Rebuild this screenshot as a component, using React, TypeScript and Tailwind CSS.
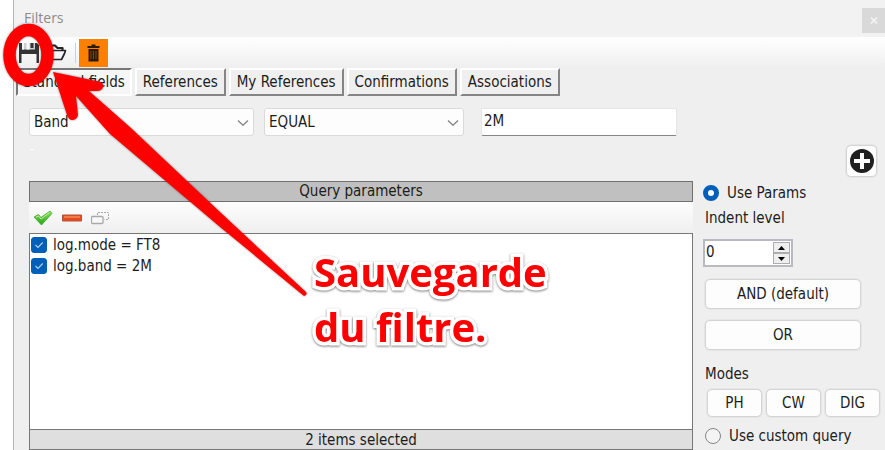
import { useState } from "react";
import type { ReactNode } from "react";

const tabs = ["Standard fields", "References", "My References", "Confirmations", "Associations"];

const modes = ["PH", "CW", "DIG"];

const buttonClass =
  "flex items-center justify-center rounded-[5px] border border-[#d4d4d4] bg-[#fdfdfd] shadow-[0_0_0_1px_#e6e6e6]";

function Dropdown({ label, options, className }: { label: string; options: string[]; className: string }) {
  return (
    <div className={`relative ${className}`}>
      <select
        aria-label={label}
        className="h-7 w-full appearance-none rounded-[3px] border border-[#dadada] bg-[#fdfdfd] pl-1 pr-7 outline-none"
      >
        {options.map((option) => (
          <option key={option}>{option}</option>
        ))}
      </select>
      <svg
        className="pointer-events-none absolute right-[5px] top-3 h-[6px] w-3"
        viewBox="0 0 12 6"
        fill="none"
        stroke="#868686"
        strokeWidth="1.3"
      >
        <path d="M1 .5 6 5.3 11 .5" />
      </svg>
    </div>
  );
}

function CheckItem({ children }: { children: ReactNode }) {
  return (
    <label className="flex h-[21px] items-center gap-[6px]">
      <span className="relative h-4 w-4">
        <input
          type="checkbox"
          defaultChecked
          className="block h-4 w-4 appearance-none rounded-[3px] border border-[#005fb8] checked:bg-[#005fb8]"
        />
        <svg
          className="pointer-events-none absolute inset-0"
          viewBox="0 0 16 16"
          fill="none"
          stroke="#b5d2ec"
          strokeWidth="1.1"
        >
          <path d="m4.5 8 2.500 2.500 4.700-5" />
        </svg>
      </span>
      {children}
    </label>
  );
}

function SaveIcon() {
  return (
    <svg width="20" height="20" viewBox="0 0 20 20">
      <path d="M0 0h18l2 2v18h-2.500v-9h-15v9H0z" fill="#333" />
      <path d="M3 0h13v6.500H3z" fill="#c9d0d3" />
      <path d="M3 0h2v6.500H3z M7.500 0h3v6.500h-3z" fill="#f8f8f8" />
      <path d="M11.500 0h3v5h-3z" fill="#333" />
    </svg>
  );
}

function FolderIcon() {
  return (
    <svg width="20" height="17" viewBox="0 0 20 17" fill="none" stroke="#262626" strokeWidth="1.700" strokeLinejoin="round">
      <path d="M2 14V1.500h6l2.500 2.500h5v3" strokeWidth="2.200" />
      <path d="M2 15.500 6 6.500h12.500l-1 3-3 6z" />
    </svg>
  );
}

function TrashIcon() {
  return (
    <svg width="13" height="18" viewBox="0 0 13 18">
      <path d="M.5 2h4V.5h4V2h4v2H.5z M1.500 5h10v12.500h-10z" fill="#2b1a05" />
      <path d="M4 7v8M6.500 7v8M9 7v8" stroke="#9c5208" strokeWidth="0.8" />
    </svg>
  );
}

function TickIcon() {
  return (
    <svg width="20" height="16" viewBox="0 0 20 16">
      <defs>
        <linearGradient id="tick" x1="0" y1="0" x2="0" y2="1">
          <stop offset="0" stopColor="#8be35c" />
          <stop offset="1" stopColor="#22a514" />
        </linearGradient>
      </defs>
      <path d="m1 7 4.500-2.500L8 7.500 17 1l2 2.500L8.500 15z" fill="url(#tick)" stroke="#3b9e2c" strokeWidth="0.7" />
      <path d="m3 7.300 2.500-1.300L8 9l8.500-6.500" fill="none" stroke="#c5f5a5" strokeWidth="0.9" />
    </svg>
  );
}

function MinusIcon() {
  return (
    <svg width="20" height="8" viewBox="0 0 20 8">
      <path d="M.5 1h19v6H.5z" fill="#e54b1c" stroke="#b5553c" />
      <path d="M2 3h16" stroke="#f58b5a" strokeWidth="1.500" />
    </svg>
  );
}

function CopyIcon() {
  return (
    <svg width="18" height="14" viewBox="0 0 18 14" fill="none" stroke="#a9a9a9">
      <path d="M6.500 4V1.500h11v7h-4" strokeDasharray="2 1" />
      <rect x="0.500" y="5.500" width="11.500" height="7" rx="1" fill="#f8f8f8" strokeWidth="1.300" />
    </svg>
  );
}

// Red marker, arrow and caption that point at the save button
function Annotation() {
  return (
    <div className="pointer-events-none absolute left-0 top-0">
      <svg width="320" height="310" viewBox="0 0 320 310" className="drop-shadow-[0_0_1px_rgba(0,0,0,0.45)]">
        <ellipse cx="28.500" cy="55" rx="19" ry="25" fill="none" stroke="#f00" strokeWidth="12.500" />
        <path
          d="M53 72 99 81.500Q104 83 103 87 102 91 97 91L89 91 131 128 220 212 306 292Q308 295 304 296L220 227 110 134 76 96 78 115Q77 120 72 120 69 120 67 115Z"
          fill="#f00"
        />
      </svg>
      <p className="absolute left-[314px] top-[244px] whitespace-nowrap font-['Open_Sans',sans-serif] text-[40px] font-bold leading-[55px] text-[#f00] [-webkit-text-stroke:7px_white] [filter:drop-shadow(0_1px_1px_rgba(0,0,0,0.5))] [paint-order:stroke_fill]">
        Sauvegarde
        <br />
        du filtre.
      </p>
    </div>
  );
}

export default function App() {
  const [tab, setTab] = useState(tabs[0]);
  const [indent, setIndent] = useState(0);

  return (
    <div className="relative flex min-h-screen overflow-hidden bg-white pl-[13px] font-['DejaVu_Sans_Condensed','DejaVu_Sans',sans-serif] text-[15px] leading-5 text-[#1c1c1c]">
      <main className="flex min-w-0 flex-1 flex-col border-l border-[#b5b5b5] bg-[#efefef]">
        <header className="flex h-[37px] items-start justify-between bg-[#f2f2f2]">
          <h1 className="pl-[10px] pt-2 font-['Open_Sans',sans-serif] text-[14px] text-[#8c8c8c]">Filters</h1>
          <button type="button" aria-label="Close" className="mt-2 flex h-[25px] w-[23px] items-center justify-center bg-[#d9d9d9]">
            <svg width="8" height="7" viewBox="0 0 8 7" stroke="#f5f5f5" strokeWidth="1.600">
              <path d="m1 .5 6 6M7 .5l-6 6" />
            </svg>
          </button>
        </header>

        <div className="flex h-[31px] items-center bg-linear-to-b from-white to-[#efefef] pl-[5px]">
          <button type="button" aria-label="Save filter" className="w-7">
            <SaveIcon />
          </button>
          <button type="button" aria-label="Open filter" className="w-7">
            <FolderIcon />
          </button>
          <span className="mr-[3px] h-5 w-px bg-[#cfcfcf]" />
          <button type="button" aria-label="Delete filter" className="flex h-7 w-[29px] items-center justify-center bg-[#ff8000]">
            <TrashIcon />
          </button>
        </div>

        <nav className="flex gap-[3px] pl-[2px]">
          {tabs.map((name) => (
            <button
              key={name}
              type="button"
              onClick={() => setTab(name)}
              className={
                name === tab
                  ? "h-7 whitespace-nowrap border-2 border-b-white border-l-[#777] border-r-white border-t-[#777] bg-[#f6f6f6] px-[5px]"
                  : "h-7 whitespace-nowrap border-2 border-b-[#858585] border-l-white border-r-[#858585] border-t-white px-[6px]"
              }
            >
              {name}
            </button>
          ))}
        </nav>

        <div className="flex pl-[15px] pt-3">
          <Dropdown label="Field" options={["Band", "Mode"]} className="w-[225px]" />
          <Dropdown label="Operator" options={["EQUAL", "NOT EQUAL"]} className="ml-[10px] w-[200px]" />
          <input
            aria-label="Value"
            defaultValue="2M"
            className="ml-[17px] h-7 w-[196px] rounded-[2px] border border-[#e5e5e5] border-b-[#868686] bg-white px-[2px] pb-[2px] outline-none"
          />
        </div>

        <div className="flex items-start justify-between pl-4 pr-2 pt-[9px]">
          <span className="mt-1 h-px w-1 bg-white" />
          <button type="button" aria-label="Add parameter" className={`h-8 w-[31px] ${buttonClass}`}>
            <svg width="24" height="24" viewBox="0 0 24 24">
              <circle cx="12" cy="12" r="12" fill="#202020" />
              <path d="M12 4v16M4 12h16" stroke="#fff" strokeWidth="4" />
            </svg>
          </button>
        </div>

        <div className="flex flex-1 gap-[10px] pl-[15px] pt-1">
          <section className="flex min-w-0 flex-1 flex-col">
            <h2 className="h-[21px] border border-[#6f6f6f] bg-[#c0c0c0] text-center leading-[19px]">Query parameters</h2>
            <div className="flex h-[31px] items-center gap-[9px] bg-linear-to-b from-[#fdfdfd] to-[#efefef] pl-1">
              <button type="button" aria-label="Check all">
                <TickIcon />
              </button>
              <button type="button" aria-label="Remove">
                <MinusIcon />
              </button>
              <button type="button" aria-label="Duplicate">
                <CopyIcon />
              </button>
            </div>
            <div className="flex-1 border border-[#777] bg-white pl-px">
              <CheckItem>log.mode = FT8</CheckItem>
              <CheckItem>log.band = 2M</CheckItem>
            </div>
            <p className="h-5 border border-t-0 border-[#777] bg-[#dfdfdf] text-center">2 items selected</p>
          </section>

          <aside className="w-[182px] shrink-0">
            <label className="flex items-center gap-2 pt-[2px]">
              <input
                type="radio"
                name="source"
                defaultChecked
                className="h-4 w-4 appearance-none rounded-full border border-[#858585] checked:border-5 checked:border-[#005fb8] checked:bg-white"
              />
              Use Params
            </label>
            <label htmlFor="indent" className="block pl-[2px] pt-[5px]">
              Indent level
            </label>
            <div className="mt-[11px] flex h-7 w-[90px] border-2 border-[#b9b9c1] bg-white p-px">
              <input
                id="indent"
                value={indent}
                onChange={(event) => setIndent(Number(event.target.value) || 0)}
                className="w-0 flex-1 pb-[2px] outline-none"
              />
              <div className="flex w-[17px] flex-col">
                <button
                  type="button"
                  aria-label="Increase"
                  onClick={() => setIndent(indent + 1)}
                  className="flex flex-1 items-center justify-center border border-[#adadad] bg-[#efefef]"
                >
                  <svg width="7" height="4" viewBox="0 0 7 4">
                    <path d="M0 4 3.500 0 7 4z" />
                  </svg>
                </button>
                <button
                  type="button"
                  aria-label="Decrease"
                  onClick={() => setIndent(Math.max(0, indent - 1))}
                  className="flex flex-1 items-center justify-center border border-[#adadad] bg-[#efefef]"
                >
                  <svg width="7" height="4" viewBox="0 0 7 4">
                    <path d="M0 0h7L3.500 4z" />
                  </svg>
                </button>
              </div>
            </div>
            <button type="button" className={`ml-[2px] mt-3 h-[30px] w-[156px] ${buttonClass}`}>
              AND (default)
            </button>
            <button type="button" className={`ml-[2px] mt-[11px] h-[30px] w-[156px] ${buttonClass}`}>
              OR
            </button>
            <p className="pl-[2px] pt-[14px]">Modes</p>
            <div className="flex gap-1 pl-1 pt-[5px]">
              {modes.map((mode) => (
                <button key={mode} type="button" className={`h-7 w-[55px] ${buttonClass}`}>
                  {mode}
                </button>
              ))}
            </div>
            <label className="flex items-center gap-2 pl-[2px] pt-[9px]">
              <input
                type="radio"
                name="source"
                className="h-4 w-4 appearance-none rounded-full border border-[#858585] bg-[#f4f4f4] checked:border-5 checked:border-[#005fb8] checked:bg-white"
              />
              Use custom query
            </label>
          </aside>
        </div>
      </main>
      <Annotation />
    </div>
  );
}
